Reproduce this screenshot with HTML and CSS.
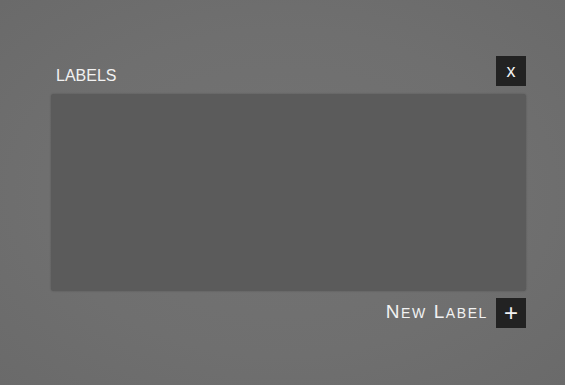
FILE: index.html
```html
<!DOCTYPE html>
<html lang="en">
<head>
    <meta charset="UTF-8">
    <meta name="viewport" content="width=device-width, initial-scale=1.0">
    <title>Labels</title>
    <link rel="stylesheet" href="styles.css">
</head>
<body>
    <div class="labels-dialog">
        <!-- Header -->
        <div class="labels-header">
            <span class="labels-title">LABELS</span>
            <button class="square-btn close-btn">x</button>
        </div>
        <!-- List -->
        <div class="labels-list"></div>
        <!-- Footer -->
        <div class="labels-footer">
            <span class="new-label">N<small>EW</small> L<small>ABEL</small></span>
            <button class="square-btn add-btn">+</button>
        </div>
    </div>
</body>
</html>
```

FILE: styles.css
```css
html,
body {
  height: 100%;
  overflow: hidden;
}

body {
  margin: 0;
  padding: 56px 0 0 51px;
  box-sizing: border-box;
  font-family: "Liberation Sans", Arial, sans-serif;
  color: #f2f2f2;
  background: radial-gradient(ellipse at center, #737373 0%, #6f6f6f 60%, #6a6a6a 100%);
}

.labels-dialog {
  width: 475px;
}

.labels-header {
  display: flex;
  justify-content: space-between;
  align-items: flex-end;
  height: 30px;
}

.labels-title {
  font-size: 16px;
  line-height: 1;
  padding: 0 0 2px 5px;
}

.square-btn {
  width: 30px;
  height: 30px;
  padding: 0;
  border: none;
  background: #222;
  color: #f2f2f2;
  font-family: "Liberation Sans", Arial, sans-serif;
  cursor: pointer;
}

.close-btn {
  font-size: 18px;
  line-height: 28px;
}

.add-btn {
  font-size: 24px;
  line-height: 30px;
}

.labels-list {
  margin-top: 8px;
  height: 197px;
  background: #5b5b5b;
  border-radius: 3px;
  box-shadow: 0 0 2px rgba(0, 0, 0, 0.25);
}

.labels-footer {
  display: flex;
  justify-content: flex-end;
  align-items: flex-end;
  gap: 8px;
  margin-top: 7px;
}

.new-label {
  font-size: 19px;
  letter-spacing: 1.6px;
  line-height: 1;
  padding-bottom: 7px;
}

.new-label small {
  font-size: 14px;
}
```
